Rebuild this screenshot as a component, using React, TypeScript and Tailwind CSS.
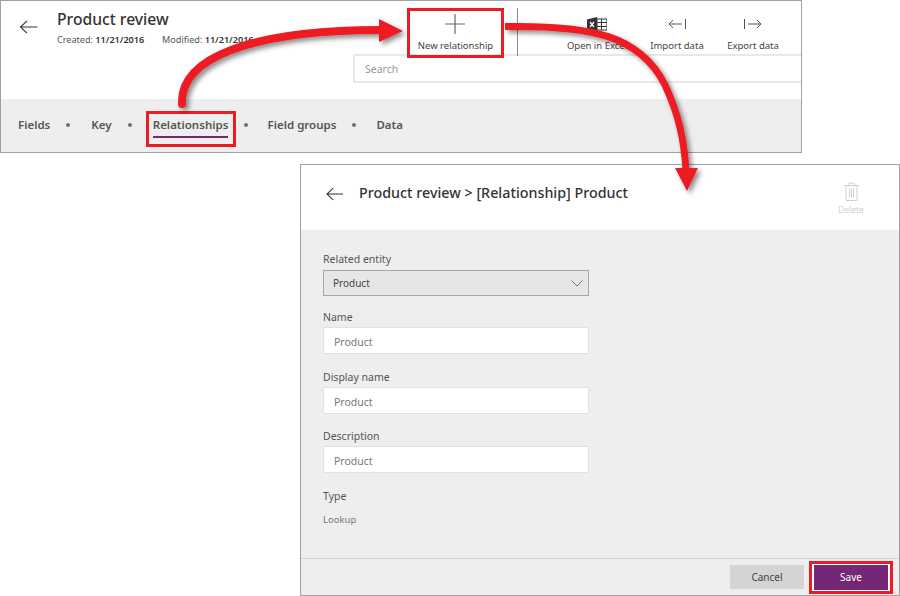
const Tab = ({ label, active }: { label: string; active?: boolean }) => (
  <div
    className={
      active
        ? 'flex h-[36px] w-[90px] items-start justify-center border-[3px] border-[#ed1c24] pt-[2px]'
        : 'flex h-[36px] items-start pt-[5px]'
    }
  >
    <span className={active ? 'border-b-2 border-[#742774] pb-[3px] leading-[17px]' : 'leading-[17px]'}>{label}</span>
  </div>
);

const Dot = () => <div className="mb-[8px] h-[4px] w-[4px] shrink-0 rounded-full bg-[#707070]" />;

const Command = ({ label, width, children }: { label: string; width: string; children: React.ReactNode }) => (
  <div className={`flex flex-col items-center ${width}`}>
    <div className="flex h-[30px] items-center">{children}</div>
    <span className="text-[9.5px] leading-[14px] text-[#444]">{label}</span>
  </div>
);

const Field = ({ label, top }: { label: string; top: string }) => (
  <div className={top}>
    <div className="text-[10.5px] leading-[16px] text-[#555]">{label}</div>
    <div className="mt-[2px] flex h-[27px] w-[266px] items-center border border-[#e2e2e2] bg-white pl-[10px] pt-[5px] text-[10.5px] text-[#777]">
      Product
    </div>
  </div>
);

const BackArrow = ({ w }: { w: number }) => (
  <svg width={w} height="14" viewBox="0 0 18 14" fill="none" stroke="#333" strokeWidth="1.1">
    <path d="M18 7H1M7.5 .8 1 7l6.5 6.2" />
  </svg>
);

export default function App() {
  return (
    <div className="relative h-[596px] w-[900px] overflow-hidden bg-white font-['Noto_Sans',sans-serif]">
      {/* entity page */}
      <div className="flex h-[153px] w-[802px] flex-col border border-[#a0a0a0]">
        <div className="flex h-[98px]">
          <div className="w-[352px] shrink-0">
            <div className="flex">
              <div className="ml-[18px] mt-[19px] w-[38px]">
                <BackArrow w={19} />
              </div>
              <div className="mt-[7px]">
                <div className="text-[15.7px] font-medium leading-[22px] text-[#333]">Product review</div>
                <div className="mt-[3px] flex whitespace-nowrap text-[9.1px] leading-[14px] text-[#555]">
                  <span className="w-[105px]">
                    Created: <b className="font-semibold text-[#333]">11/21/2016</b>
                  </span>
                  <span>
                    Modified: <b className="font-semibold text-[#333]">11/21/2016</b>
                  </span>
                </div>
              </div>
            </div>
          </div>
          <div className="flex-1">
            <div className="flex h-[55px] items-start border-b-2 border-[#e8e8e8]">
              <div className="ml-[54px] mt-[7px] flex h-[50px] w-[97px] shrink-0 flex-col items-center border-[3px] border-[#ed1c24]">
                <svg width="20" height="20" viewBox="0 0 20 20" className="mr-[2px] mt-[3px]" stroke="#666" strokeWidth="1.2">
                  <path d="M10 0v20M0 10h20" />
                </svg>
                <span className="mt-[5px] text-[9.5px] leading-[14px] text-[#444]">New relationship</span>
              </div>
              <div className="ml-[13px] mt-[7px] h-[48px] w-[1px] shrink-0 bg-[#8a8a8a]" />
              <div className="ml-[39px] mt-[8px] flex">
                <Command label="Open in Excel" width="w-[80px]">
                  <svg width="20" height="15" viewBox="0 0 20 15">
                    <path d="M0 2.500 10 0v15L0 12.500z" fill="#333" />
                    <path d="M10 2h10v11H10z" fill="#fff" stroke="#333" />
                    <path d="M10 5.500h10M10 9.500h10M14.500 2v11" stroke="#333" />
                    <path d="M3 5l4 5M7 5l-4 5" stroke="#fff" strokeWidth="1.3" />
                  </svg>
                </Command>
                <Command label="Import data" width="w-[80px]">
                  <svg width="18" height="10" viewBox="0 0 18 10" fill="none" stroke="#555">
                    <path d="M17.500 0v10M14 5H1M5 1 1 5l4 4" />
                  </svg>
                </Command>
                <Command label="Export data" width="w-[72px]">
                  <svg width="18" height="10" viewBox="0 0 18 10" fill="none" stroke="#555">
                    <path d="M.5 0v10M4 5h13M13 1l4 4-4 4" />
                  </svg>
                </Command>
              </div>
            </div>
            <div className="flex h-[27px] items-center border-b-2 border-l-2 border-[#e8e8e8] pl-[10px] pt-[3px] text-[10.5px] text-[#999]">
              Search
            </div>
          </div>
        </div>
        <div className="flex flex-1 items-center bg-[#eeeeee] pl-[17px] pt-[7px] text-[11.5px] font-semibold text-[#555]">
          <Tab label="Fields" />
          <div className="ml-[16px] mr-[21px]">
            <Dot />
          </div>
          <Tab label="Key" />
          <div className="ml-[16px] mr-[14px]">
            <Dot />
          </div>
          <Tab label="Relationships" active />
          <div className="ml-[8px] mr-[20px]">
            <Dot />
          </div>
          <Tab label="Field groups" />
          <div className="ml-[16px] mr-[20px]">
            <Dot />
          </div>
          <Tab label="Data" />
        </div>
      </div>

      {/* relationship page */}
      <div className="ml-[300px] mt-[11px] flex h-[432px] w-[600px] flex-col border border-[#a0a0a0]">
        <div className="flex h-[65px] shrink-0 bg-white">
          <div className="ml-[25px] mt-[22px]">
            <BackArrow w={17} />
          </div>
          <div className="ml-[16px] mt-[17px] text-[14.3px] font-medium leading-[22px] text-[#333]">
            Product review &gt; [Relationship] Product
          </div>
          <div className="ml-auto mr-[28px] mt-[17px] flex w-[40px] flex-col items-center text-[#d0d0d0]">
            <svg width="15" height="19" viewBox="0 0 15 19" fill="none" stroke="#cfcfcf">
              <path d="M0 3.500h15M5 3.500V1h5v2.500M2 3.500v15h11v-15M5.500 6.500v9M7.500 6.500v9M9.500 6.500v9" />
            </svg>
            <span className="mt-[3px] text-[8.5px] leading-[12px]">Delete</span>
          </div>
        </div>
        <div className="flex-1 bg-[#eeeeee] pl-[22px] pt-[21px]">
          <div className="text-[10.5px] leading-[16px] text-[#555]">Related entity</div>
          <div className="mt-[3px] flex h-[26px] w-[266px] items-center justify-between border border-[#a6a6a6] bg-[#e6e6e6] pl-[9px] pr-[5px] pt-[1px] text-[10px] text-[#444]">
            Product
            <svg width="12" height="7" viewBox="0 0 12 7" fill="none" stroke="#777">
              <path d="M.5.5 6 6 11.500.5" />
            </svg>
          </div>
          <Field label="Name" top="mt-[13px]" />
          <Field label="Display name" top="mt-[15px]" />
          <Field label="Description" top="mt-[14px]" />
          <div className="mt-[15px] text-[10.5px] leading-[16px] text-[#555]">Type</div>
          <div className="mt-[8px] text-[9.5px] leading-[16px] text-[#777]">Lookup</div>
        </div>
        <div className="flex h-[37px] shrink-0 items-center justify-end border-t border-[#d4d4d4] bg-[#eeeeee] pr-[6px]">
          <button className="h-[24px] w-[74px] bg-[#d4d4d4] text-[10px] text-[#444]">Cancel</button>
          <div className="ml-[5px] flex h-[33px] w-[84px] items-center justify-center border-[3px] border-[#ed1c24] bg-white">
            <button className="h-[25px] w-[74px] bg-[#742774] text-[10px] text-white">Save</button>
          </div>
        </div>
      </div>

      {/* callout arrows */}
      <svg width="900" height="596" viewBox="0 0 900 596" fill="none" className="pointer-events-none absolute left-0 top-0">
        <defs>
          <filter id="shadow" x="-10%" y="-10%" width="125%" height="125%">
            <feDropShadow dx="3" dy="3" stdDeviation="2.500" floodColor="#000" floodOpacity="0.45" />
          </filter>
        </defs>
        <g filter="url(#shadow)">
          <path d="M182 104C180 58 250 30 382 30" stroke="#ed1c24" strokeWidth="8" strokeLinecap="round" />
          <path d="M379 19 403 31 379 42z" fill="#ed1c24" />
          <path d="M505 26.500C590 25 640 35 665 85 679 115 684 140 686 170" stroke="#ed1c24" strokeWidth="7" />
          <path d="M675 168H698L687 191z" fill="#ed1c24" />
        </g>
      </svg>
    </div>
  );
}
